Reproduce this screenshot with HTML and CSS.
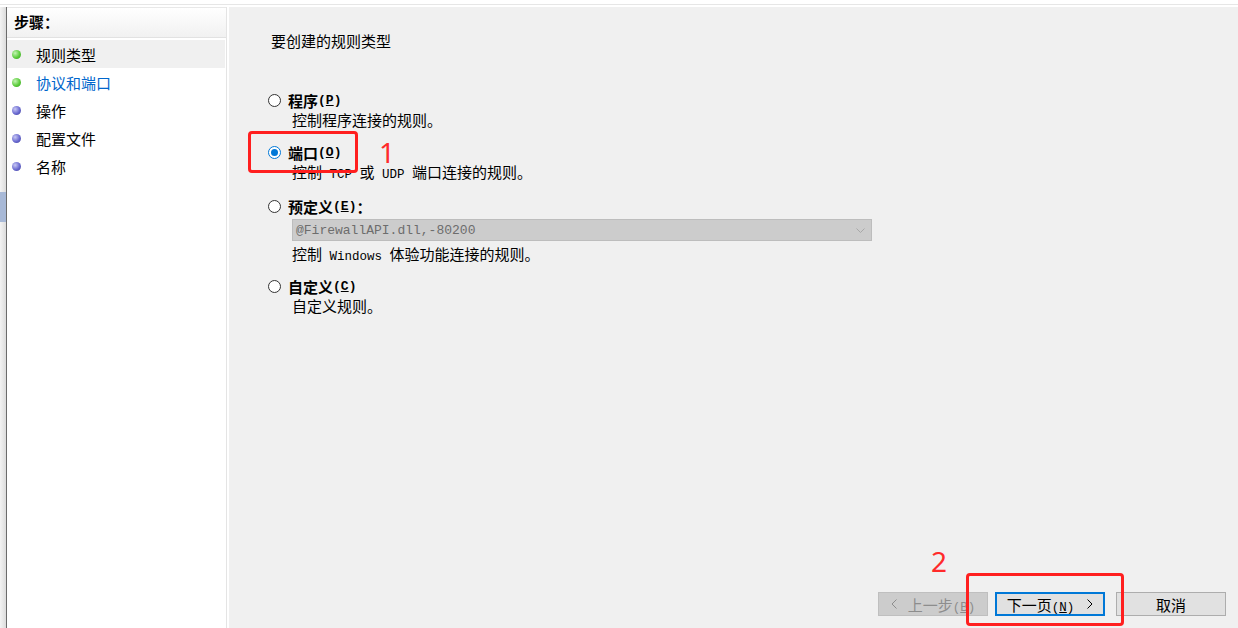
FILE: index.html
```html
<!DOCTYPE html>
<html lang="zh-CN">
<head>
  <meta charset="UTF-8" />
  <title>新建入站规则向导</title>
  <link rel="stylesheet" href="styles.css">
</head>
<body>
  <div class="topbar"></div>
  <div class="wizard">
    <div class="edge"><div class="edge-mark"></div></div>

    <aside class="steps">
      <div class="steps-head">步骤：</div>
      <ul class="step-list">
        <li class="step selected"><span class="bullet done"></span>规则类型</li>
        <li class="step active"><span class="bullet done"></span>协议和端口</li>
        <li class="step"><span class="bullet"></span>操作</li>
        <li class="step"><span class="bullet"></span>配置文件</li>
        <li class="step"><span class="bullet"></span>名称</li>
      </ul>
    </aside>

    <main class="page">
      <p class="page-title">要创建的规则类型</p>

      <div class="options">
        <div class="option">
          <div class="option-label"><span class="radio"></span>程序<span class="mono">(<u>P</u>)</span></div>
          <p class="option-desc">控制程序连接的规则。</p>
        </div>
        <div class="option">
          <div class="option-label"><span class="radio checked"></span>端口<span class="mono">(<u>O</u>)</span></div>
          <p class="option-desc">控制<span class="mono"> TCP </span>或<span class="mono"> UDP </span>端口连接的规则。</p>
        </div>
        <div class="option option-predef">
          <div class="option-label"><span class="radio"></span>预定义<span class="mono">(<u>E</u>)</span>：</div>
          <div class="dropdown">
            <span>@FirewallAPI.dll,-80200</span>
            <svg width="9" height="5" viewBox="0 0 9 5"><path d="M0.5 0.5 L4.5 4.5 L8.5 0.5" fill="none" stroke="#a8a8a8" stroke-width="1"/></svg>
          </div>
          <p class="option-desc">控制<span class="mono"> Windows </span>体验功能连接的规则。</p>
        </div>
        <div class="option">
          <div class="option-label"><span class="radio"></span>自定义<span class="mono">(<u>C</u>)</span></div>
          <p class="option-desc">自定义规则。</p>
        </div>
      </div>

      <div class="buttons">
        <button class="btn" disabled>
          <svg width="6" height="10" viewBox="0 0 6 10"><path d="M5.5 0.5 L1 5 L5.5 9.5" fill="none" stroke="currentColor" stroke-width="1"/></svg>
          <span class="btn-text">上一步<span class="mono">(<u>B</u>)</span></span>
        </button>
        <button class="btn btn-primary">
          <span class="btn-text">下一页<span class="mono">(<u>N</u>)</span></span>
          <svg width="6" height="10" viewBox="0 0 6 10"><path d="M0.5 0.5 L5 5 L0.5 9.5" fill="none" stroke="currentColor" stroke-width="1"/></svg>
        </button>
        <button class="btn btn-cancel">取消</button>
      </div>

      <!-- annotations -->
      <div class="mark mark-1"></div>
      <span class="num num-1">1</span>
      <div class="mark mark-2"></div>
      <span class="num num-2">2</span>
    </main>
  </div>
</body>
</html>
```

FILE: styles.css
```css
body {
  margin: 0;
  height: 628px;
  overflow: hidden;
  background: #fff;
  color: #000;
  font-family: "Noto Sans CJK SC", sans-serif;
  font-size: 15px;
}

.topbar {
  height: 4px;
  border-bottom: 1px solid #e6e6e6;
  margin-bottom: 2px;
}

.wizard {
  display: flex;
  height: 621px;
}

/* bord gauche de la fenêtre parente */
.edge {
  width: 6px;
  border-right: 1px solid #6b6b6b;
  background: linear-gradient(to right, #f3f3f3, #dcdcdc);
}

.edge-mark {
  margin-top: 185px;
  height: 30px;
  background: #a8b9d7;
}

.steps {
  width: 219px;
  border-right: 1px solid #e4e4e4;
  background: #fff;
}

.steps-head {
  height: 31px;
  box-sizing: border-box;
  padding-left: 7px;
  line-height: 27px;
  font-weight: 700;
  background: linear-gradient(#ffffff, #f1f1f1);
  border-top: 1px solid #e8e8e8;
  border-bottom: 1px solid #e2e2e2;
}

.step-list {
  list-style: none;
  margin: 2px 0 0;
  padding: 0;
}

.step {
  height: 28px;
  display: flex;
  align-items: center;
  padding-left: 5px;
  margin-right: 1px;
}

.step.selected {
  background: #f0f0f0;
}

.step.active {
  color: #0066cc;
}

.bullet {
  width: 9px;
  height: 9px;
  border-radius: 50%;
  margin-right: 15px;
  background: radial-gradient(circle at 35% 35%, #c8c8f4, #6a6ad0 55%, #3c3c96);
}

.bullet.done {
  background: radial-gradient(circle at 35% 35%, #c4f4b4, #5ccc3c 55%, #2f9a16);
}

.page {
  flex: 1;
  position: relative;
  margin-left: 2px;
  padding: 24px 12px 12px 39px;
  background: #f0f0f0;
  display: flex;
  flex-direction: column;
}

.page-title {
  margin: 0 0 0 3px;
  line-height: 20px;
}

.options {
  margin-top: 39px;
  display: flex;
  flex-direction: column;
  gap: 13px;
}

.option-label {
  display: flex;
  align-items: center;
  height: 20px;
  font-weight: 700;
}

.option-predef .option-label {
  margin-top: 2px;
}

.radio {
  width: 13px;
  height: 13px;
  box-sizing: border-box;
  border: 1px solid #333;
  border-radius: 50%;
  background: #fff;
  margin-right: 7px;
  display: flex;
  align-items: center;
  justify-content: center;
}

.radio.checked {
  border-color: #0078d7;
}

.radio.checked::after {
  content: "";
  width: 7px;
  height: 7px;
  border-radius: 50%;
  background: #0078d7;
}

.option-desc {
  margin: 0 0 0 24px;
  height: 19px;
  line-height: 19px;
}

.mono {
  font-family: "Liberation Mono", monospace;
  font-size: 12.5px;
  line-height: 1;
}

.option-label .mono {
  font-size: 13px;
}

.dropdown {
  margin: 3px 0 3px 24px;
  width: 580px;
  height: 22px;
  box-sizing: border-box;
  padding: 0 6px 0 3px;
  background: #cccccc;
  border: 1px solid #bdbdbd;
  display: flex;
  align-items: center;
  justify-content: space-between;
  font-family: "Liberation Mono", monospace;
  font-size: 13px;
  color: #6d6d6d;
}

.buttons {
  margin-top: auto;
  display: flex;
  justify-content: flex-end;
  gap: 7px;
}

.btn {
  width: 110px;
  height: 24px;
  box-sizing: border-box;
  padding: 0;
  border: 1px solid #adadad;
  background: #e1e1e1;
  color: #000;
  font-family: inherit;
  font-size: 15px;
  display: flex;
  align-items: center;
  justify-content: center;
  gap: 11px;
}

.btn:disabled {
  background: #cccccc;
  border-color: #bfbfbf;
  color: #8d8d8d;
}

.btn-primary {
  border: 2px solid #0078d7;
  gap: 13px;
}

.btn-cancel {
  margin-left: 4px;
}

/* annotations rouges */
.mark {
  position: absolute;
  box-sizing: border-box;
  border: 3px solid #ff1f1f;
  border-radius: 4px;
}

.mark-1 {
  left: 19px;
  top: 124px;
  width: 110px;
  height: 42px;
}

.mark-2 {
  left: 737px;
  top: 566px;
  width: 158px;
  height: 53px;
}

.num {
  position: absolute;
  color: #ff2a2a;
  font-family: "Noto Sans", sans-serif;
  font-size: 28px;
  line-height: 1;
}

.num-1 {
  left: 150px;
  top: 131px;
}

.num-2 {
  left: 702px;
  top: 540px;
}
```
